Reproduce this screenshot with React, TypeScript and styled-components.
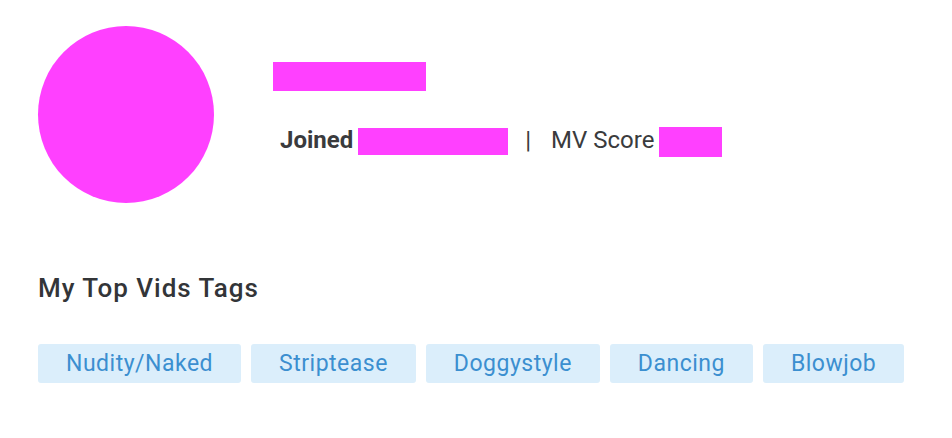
import React from "react";
import styled, { createGlobalStyle } from "styled-components";

const Global = createGlobalStyle`
  html, body { margin: 0; padding: 0; background: #fff; }
  body { font-family: Roboto, "Liberation Sans", sans-serif; color: #333; }
`;

const Page = styled.div`
  width: 952px;
  height: 438px;
  box-sizing: border-box;
  padding: 26px 38px 0 38px;
`;

const Header = styled.div`
  display: flex;
  align-items: flex-start;
  gap: 59px;
`;

const Avatar = styled.div`
  width: 176px;
  height: 177px;
  border-radius: 50%;
  background: #ff40ff;
  flex: none;
`;

const Info = styled.div`
  display: flex;
  flex-direction: column;
  padding-top: 36px;
`;

const Redact = styled.span<{ $w: number; $h: number; $top?: number }>`
  display: inline-block;
  width: ${(p) => p.$w}px;
  height: ${(p) => p.$h}px;
  margin-top: ${(p) => p.$top ?? 0}px;
  background: #ff40ff;
  flex: none;
`;

const Meta = styled.div`
  display: flex;
  align-items: flex-start;
  margin-top: 34px;
  padding-left: 7px;
  font-size: 24px;
  color: #3a3b3d;
  line-height: 30px;
`;

const Label = styled.span<{ $bold?: boolean }>`
  font-weight: ${(p) => (p.$bold ? 700 : 400)};
  margin-right: 5px;
`;

const Sep = styled.span`
  margin: 0 20px 0 17px;
`;

const Heading = styled.h2`
  margin: 70px 0 0 0;
  font-size: 26px;
  font-weight: 500;
  letter-spacing: 1px;
  color: #333538;
  line-height: 30px;
`;

const Tags = styled.div`
  display: flex;
  gap: 10px;
  margin-top: 41px;
`;

const Tag = styled.span`
  display: inline-flex;
  align-items: center;
  justify-content: center;
  height: 39px;
  padding: 0 28px;
  border-radius: 3px;
  background: #dbeefb;
  color: #3b8fd0;
  font-size: 23px;
  letter-spacing: 0.5px;
`;

const tags = ["Nudity/Naked", "Striptease", "Doggystyle", "Dancing", "Blowjob"];

export default function App() {
  return (
    <Page>
      <Global />
      <Header>
        <Avatar />
        <Info>
          <Redact $w={153} $h={29} />
          <Meta>
            <Label $bold>Joined</Label>
            <Redact $w={150} $h={27} $top={3} />
            <Sep>|</Sep>
            <Label>MV Score</Label>
            <Redact $w={63} $h={30} $top={2} />
          </Meta>
        </Info>
      </Header>
      <Heading>My Top Vids Tags</Heading>
      <Tags>
        {tags.map((t) => (
          <Tag key={t}>{t}</Tag>
        ))}
      </Tags>
    </Page>
  );
}
